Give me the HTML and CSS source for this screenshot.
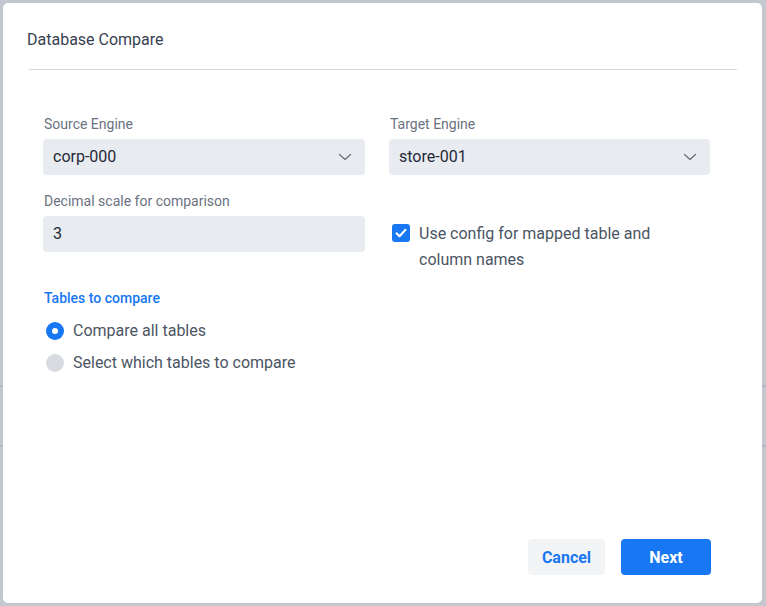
FILE: index.html
```html
<!DOCTYPE html>
<html lang="en">
<head>
<meta charset="utf-8">
<title>Database Compare</title>
<link rel="stylesheet" href="styles.css">
</head>
<body>
<div class="modal">
  <div class="modal-header">
    <h1 class="title">Database Compare</h1>
  </div>
  <div class="divider"></div>
  <div class="modal-body">
    <div class="grid">
      <div class="field">
        <label class="label">Source Engine</label>
        <div class="select">
          <span>corp-000</span>
          <svg class="chev" width="14" height="8" viewBox="0 0 14 8"><path d="M1.5 1.5l5.5 5 5.5-5" fill="none" stroke="#6b7280" stroke-width="1.3" stroke-linecap="round" stroke-linejoin="round"/></svg>
        </div>
      </div>
      <div class="field">
        <label class="label">Target Engine</label>
        <div class="select">
          <span>store-001</span>
          <svg class="chev" width="14" height="8" viewBox="0 0 14 8"><path d="M1.5 1.5l5.5 5 5.5-5" fill="none" stroke="#6b7280" stroke-width="1.3" stroke-linecap="round" stroke-linejoin="round"/></svg>
        </div>
      </div>
      <div class="field">
        <label class="label">Decimal scale for comparison</label>
        <div class="input"><span>3</span></div>
      </div>
      <div class="check-field">
        <span class="checkbox">
          <svg width="12" height="10" viewBox="0 0 12 10"><path d="M1.5 5.2l3 3 6-6.4" fill="none" stroke="#fff" stroke-width="2" stroke-linecap="round" stroke-linejoin="round"/></svg>
        </span>
        <span class="check-text">Use config for mapped table and column names</span>
      </div>
    </div>
    <div class="section-title">Tables to compare</div>
    <div class="radios">
      <div class="radio-row"><span class="radio checked"></span><span class="radio-text">Compare all tables</span></div>
      <div class="radio-row"><span class="radio"></span><span class="radio-text">Select which tables to compare</span></div>
    </div>
  </div>
  <div class="modal-footer">
    <button class="btn btn-cancel">Cancel</button>
    <button class="btn btn-next">Next</button>
  </div>
</div>
</body>
</html>
```
FILE: styles.css
```css
* { box-sizing: border-box; }
html, body { margin: 0; height: 100%; }
body {
  font-family: Roboto, "Liberation Sans", Arial, sans-serif;
  background-color: #c3c8cf;
  background-image:
    linear-gradient(to bottom, transparent 385px, #b2b8c0 385px, #b2b8c0 387px, transparent 387px, transparent 445px, #b2b8c0 445px, #b2b8c0 447px, transparent 447px);
  padding: 3px 4px 3px 3px;
  overflow: hidden;
}
.modal {
  width: 759px;
  height: 600px;
  background: #fff;
  border-radius: 5px;
  display: flex;
  flex-direction: column;
  position: relative;
}
.modal-header { padding: 27px 24px 0 24px; }
.title {
  margin: 0;
  font-size: 16px;
  font-weight: 400;
  line-height: 20px;
  color: #374151;
}
.divider {
  height: 1px;
  background: #d5d8dd;
  margin: 19px 25px 0 26px;
}
.modal-body { padding: 45px 0 0 40px; flex: 1; }
.grid {
  display: grid;
  grid-template-columns: 322px 321px;
  column-gap: 24px;
  row-gap: 17px;
}
.field { display: flex; flex-direction: column; }
.label {
  font-size: 14px;
  line-height: 18px;
  color: #6b7280;
  margin-bottom: 6px;
  padding-left: 1px;
}
.select, .input {
  height: 36px;
  background: #e8ebef;
  border-radius: 4px;
  display: flex;
  align-items: center;
  justify-content: space-between;
  padding: 0 10px 1px 10px;
  font-size: 16px;
  color: #1f2937;
}
.chev { margin-right: 3px; }
.check-field {
  display: flex;
  align-items: flex-start;
  padding: 29px 0 0 3px;
  gap: 9px;
}
.checkbox {
  width: 18px;
  height: 18px;
  border-radius: 3px;
  background: #1877f2;
  display: flex;
  align-items: center;
  justify-content: center;
  margin-top: 3px;
  flex: none;
}
.check-text {
  font-size: 16px;
  line-height: 26px;
  color: #4b5563;
  width: 260px;
}
.section-title {
  margin-top: 16px;
  font-size: 14px;
  line-height: 18px;
  font-weight: 500;
  color: #1877f2;
  padding-left: 1px;
}
.radios { margin-top: 14px; display: flex; flex-direction: column; gap: 12px; padding-left: 3px; }
.radio-row { display: flex; align-items: center; gap: 9px; height: 20px; }
.radio {
  width: 18px;
  height: 18px;
  border-radius: 50%;
  background: #d8dbe0;
  flex: none;
}
.radio.checked {
  background: #1877f2;
  position: relative;
}
.radio.checked::after {
  content: "";
  position: absolute;
  left: 6px; top: 6px;
  width: 6px; height: 6px;
  border-radius: 50%;
  background: #fff;
}
.radio-text { font-size: 16px; color: #4b5563; line-height: 20px; }
.modal-footer {
  display: flex;
  justify-content: flex-end;
  gap: 16px;
  padding: 0 51px 28px 0;
}
.btn {
  height: 36px;
  border: none;
  border-radius: 4px;
  font-family: Roboto, "Liberation Sans", Arial, sans-serif;
  font-size: 16px;
  font-weight: 700;
  padding-bottom: 1px;
  cursor: pointer;
}
.btn-cancel { width: 77px; background: #f3f4f6; color: #1877f2; }
.btn-next { width: 90px; background: #1877f2; color: #fff; }
```
